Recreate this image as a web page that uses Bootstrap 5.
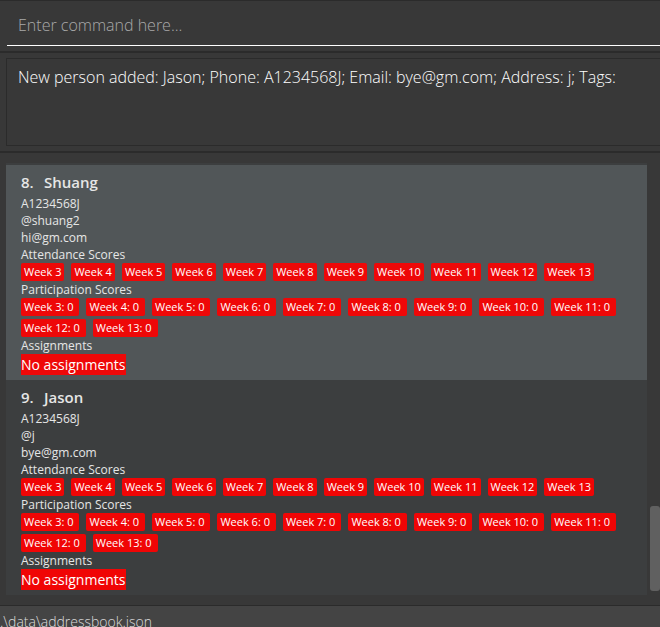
<!DOCTYPE html>
<html lang="en">
<head>
<meta charset="utf-8">
<meta name="viewport" content="width=device-width, initial-scale=1">
<title>Address Book</title>
<link href="https://cdn.jsdelivr.net/npm/bootstrap@5.3.0/dist/css/bootstrap.min.css" rel="stylesheet">
<style>
body { background: #383838; color: #e6e6e6; font-family: "Open Sans", "Noto Sans", sans-serif; font-size: 12px; line-height: 17px; }
.pane-command { border-top: 1px solid #2b2b2b; border-bottom: 2px solid #2b2b2b; padding: 6px 0 5px 7px; }
.command-input, .command-input:focus { background: transparent; color: #fff; border: 0; border-bottom: 1px solid #fff; height: 39px; padding: 0 11px 2px; font-size: 16px; font-weight: 300; box-shadow: none; }
.command-input::placeholder { color: #a9a9a9; opacity: 1; }
.pane-result { border-bottom: 2px solid #2b2b2b; padding: 5px 0 5px 6px; }
.result-box, .result-box:focus { background: transparent; color: #fff; border: 1px solid #2b2b2b; border-right: 0; height: 88px; padding: 6px 11px; font-size: 16px; line-height: 24px; font-weight: 300; resize: none; box-shadow: none; }
.pane-list { padding: 10px 0 10px 6px; }
.person-list { border-top: 2px solid #3c3e3f; }
.person { background: #3c3e3f; padding: 5px 15px; --tag: #f00505; }
.person.selected { background: #515658; --tag: #ee0808; }
.person h2 { font-size: 15px; line-height: 25px; font-weight: 600; }
.person h2 span { width: 23px; }
.tags { column-gap: 7px; row-gap: 3px; }
.tag { background: var(--tag); color: #fff; border-radius: 2px; padding: 0 3px; font-size: 11px; line-height: 18px; }
.score { padding-right: 6px; }
.none { background: var(--tag); color: #fff; font-size: 14px; line-height: 21px; font-weight: 500; }
.scroll-track { width: 13px; padding: 0 0 4px 3px; }
.scroll-thumb { height: 85px; background: #606060; border-radius: 3px; }
.status { background: #444; border-top: 1px solid #2b2b2b; color: #dcdcdc; padding: 4px 0; font-size: 14px; line-height: 24px; font-weight: 300; }
</style>
<script src="https://cdn.jsdelivr.net/npm/bootstrap@5.3.0/dist/js/bootstrap.bundle.min.js"></script>
</head>
<body class="vh-100 overflow-hidden">
<div class="d-flex flex-column">
  <div class="pane-command"><input class="form-control rounded-0 command-input" type="text" aria-label="Command" placeholder="Enter command here..."></div>
  <div class="pane-result"><textarea class="form-control rounded-0 result-box" aria-label="Result" readonly>New person added: Jason; Phone: A1234568J; Email: bye@gm.com; Address: j; Tags: </textarea></div>
  <main class="pane-list d-flex">
    <ul class="person-list list-unstyled flex-grow-1 mb-0">
      <li class="person selected">
        <h2 class="d-flex mb-0"><span>8.</span>Shuang</h2>
        <div>A1234568J</div>
        <div>@shuang2</div>
        <div>hi@gm.com</div>
        <div>Attendance Scores</div>
        <div class="tags d-flex flex-wrap"><span class="tag">Week 3</span><span class="tag">Week 4</span><span class="tag">Week 5</span><span class="tag">Week 6</span><span class="tag">Week 7</span><span class="tag">Week 8</span><span class="tag">Week 9</span><span class="tag">Week 10</span><span class="tag">Week 11</span><span class="tag">Week 12</span><span class="tag">Week 13</span></div>
        <div>Participation Scores</div>
        <div class="tags d-flex flex-wrap"><span class="tag score">Week 3: 0</span><span class="tag score">Week 4: 0</span><span class="tag score">Week 5: 0</span><span class="tag score">Week 6: 0</span><span class="tag score">Week 7: 0</span><span class="tag score">Week 8: 0</span><span class="tag score">Week 9: 0</span><span class="tag score">Week 10: 0</span><span class="tag score">Week 11: 0</span><span class="tag score">Week 12: 0</span><span class="tag score">Week 13: 0</span></div>
        <div>Assignments</div>
        <div class="d-flex"><span class="none">No assignments</span></div>
      </li>
      <li class="person">
        <h2 class="d-flex mb-0"><span>9.</span>Jason</h2>
        <div>A1234568J</div>
        <div>@j</div>
        <div>bye@gm.com</div>
        <div>Attendance Scores</div>
        <div class="tags d-flex flex-wrap"><span class="tag">Week 3</span><span class="tag">Week 4</span><span class="tag">Week 5</span><span class="tag">Week 6</span><span class="tag">Week 7</span><span class="tag">Week 8</span><span class="tag">Week 9</span><span class="tag">Week 10</span><span class="tag">Week 11</span><span class="tag">Week 12</span><span class="tag">Week 13</span></div>
        <div>Participation Scores</div>
        <div class="tags d-flex flex-wrap"><span class="tag score">Week 3: 0</span><span class="tag score">Week 4: 0</span><span class="tag score">Week 5: 0</span><span class="tag score">Week 6: 0</span><span class="tag score">Week 7: 0</span><span class="tag score">Week 8: 0</span><span class="tag score">Week 9: 0</span><span class="tag score">Week 10: 0</span><span class="tag score">Week 11: 0</span><span class="tag score">Week 12: 0</span><span class="tag score">Week 13: 0</span></div>
        <div>Assignments</div>
        <div class="d-flex"><span class="none">No assignments</span></div>
      </li>
    </ul>
    <div class="scroll-track d-flex flex-column justify-content-end flex-shrink-0"><div class="scroll-thumb"></div></div>
  </main>
  <footer class="status">.\data\addressbook.json</footer>
</div>
</body>
</html>
